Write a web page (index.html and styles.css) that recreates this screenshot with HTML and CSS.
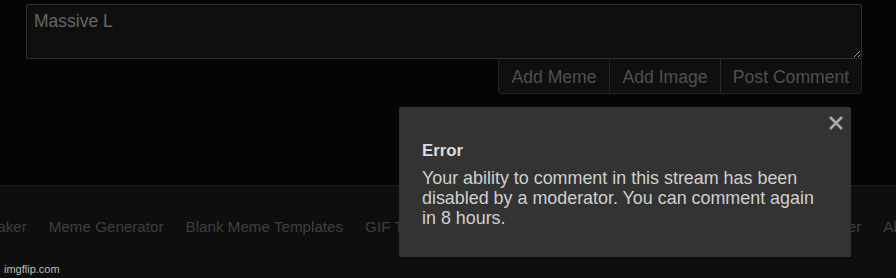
FILE: index.html
```html
<!DOCTYPE html>
<html>
<head>
<meta charset="utf-8">
<link rel="stylesheet" href="styles.css">
</head>
<body>
<div class="page">
  <section class="comment-area">
    <textarea class="comment-box">Massive L</textarea>
    <div class="btn-row">
      <div class="btn-group">
        <button class="btn">Add Meme</button>
        <button class="btn">Add Image</button>
        <button class="btn">Post Comment</button>
      </div>
    </div>
  </section>
  <footer class="footer">
    <nav class="footer-links">
      <a>GIF Maker</a>
      <a>Meme Generator</a>
      <a>Blank Meme Templates</a>
      <a>GIF Templates</a>
      <a>Chart Maker</a>
      <a>Demotivational Maker</a>
      <a>Image Cropper</a>
      <a>About</a>
    </nav>
  </footer>
  <div class="modal">
    <span class="modal-close" aria-label="close">
      <svg width="16" height="16" viewBox="0 0 16 16"><path d="M2 2L14 14M14 2L2 14" stroke="#a9a9a9" stroke-width="2.6" stroke-linecap="butt"/></svg>
    </span>
    <div class="modal-title">Error</div>
    <div class="modal-body">Your ability to comment in this stream has been disabled by a moderator. You can comment again in 8 hours.</div>
  </div>
  <div class="watermark">imgflip.com</div>
</div>
</body>
</html>
```
FILE: styles.css
```css
html, body {
  margin: 0;
  padding: 0;
  background: #050505;
  font-family: "Liberation Sans", Arial, sans-serif;
}
.page {
  position: relative;
  width: 896px;
  height: 278px;
  overflow: hidden;
  display: flex;
  flex-direction: column;
}
.comment-area {
  display: flex;
  flex-direction: column;
  padding: 4px 34px 0 26px;
  height: 181px;
}
.comment-box {
  display: block;
  box-sizing: border-box;
  width: 836px;
  height: 55px;
  margin: 0;
  background: #0f0f0f;
  border: 1px solid #2e2e2e;
  border-radius: 2px;
  color: #666;
  font-family: "Liberation Sans", Arial, sans-serif;
  font-size: 17.5px;
  line-height: 20px;
  padding: 6px 7px;
  resize: vertical;
  outline: none;
}
.btn-row {
  display: flex;
  justify-content: flex-end;
}
.btn-group {
  display: flex;
  width: 364px;
  height: 35px;
  box-sizing: border-box;
  border: 1px solid #242424;
  border-top: none;
  border-radius: 0 0 3px 3px;
  background: #0d0d0d;
  overflow: hidden;
}
.btn {
  flex: none;
  height: 100%;
  margin: 0;
  padding: 2px 0 0;
  border: none;
  border-left: 1px solid #262626;
  background: #0f0f0f;
  color: #505050;
  font-family: "Liberation Sans", Arial, sans-serif;
  font-size: 17.6px;
}
.btn:first-child { border-left: none; width: 110px; }
.btn:nth-child(2) { width: 111px; }
.btn:nth-child(3) { width: 141px; }
.footer {
  flex: 1;
  background: #0e0e0e;
  border-top: 1px solid #1c1c1c;
}
.footer-links {
  display: flex;
  gap: 22px;
  white-space: nowrap;
  margin-left: -45px;
  padding-top: 32px;
  font-size: 15.2px;
  color: #3e3e3e;
}
.modal {
  position: absolute;
  left: 399px;
  top: 107px;
  width: 452px;
  height: 150px;
  box-sizing: border-box;
  background: #333333;
  border-radius: 2px;
  padding: 34px 25px 0 23px;
}
.modal-close {
  position: absolute;
  right: 7px;
  top: 8px;
  width: 16px;
  height: 16px;
  display: flex;
}
.modal-title {
  font-weight: bold;
  font-size: 16.8px;
  line-height: 20px;
  color: #dcdcdc;
  margin-bottom: 7px;
}
.modal-body {
  font-size: 17.9px;
  line-height: 20px;
  color: #cfcfcf;
}
.watermark {
  position: absolute;
  left: 4px;
  bottom: 3px;
  font-size: 11px;
  color: #bdbdbd;
  font-family: "Liberation Sans", Arial, sans-serif;
}
```
